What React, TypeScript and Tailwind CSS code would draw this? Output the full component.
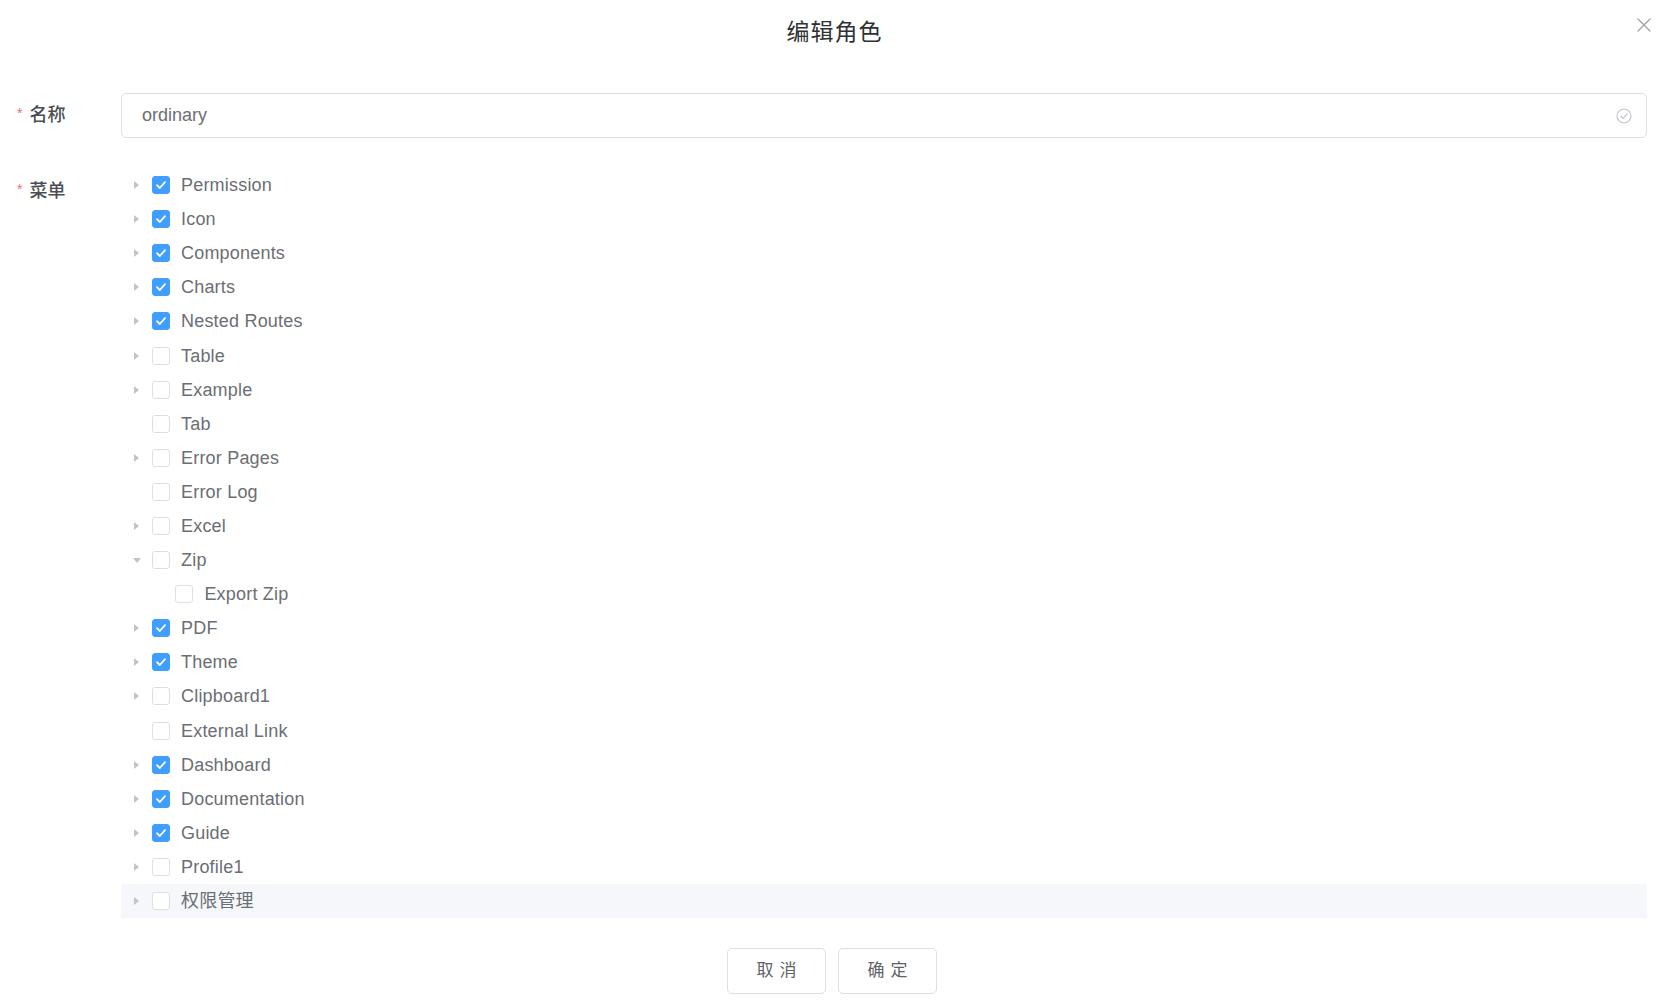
import React from "react";

interface Node {
  label: string;
  checked?: boolean;
  leaf?: boolean;
  open?: boolean;
  depth?: number;
}

const nodes: Node[] = [
  { label: "Permission", checked: true },
  { label: "Icon", checked: true },
  { label: "Components", checked: true },
  { label: "Charts", checked: true },
  { label: "Nested Routes", checked: true },
  { label: "Table" },
  { label: "Example" },
  { label: "Tab", leaf: true },
  { label: "Error Pages" },
  { label: "Error Log", leaf: true },
  { label: "Excel" },
  { label: "Zip", open: true },
  { label: "Export Zip", leaf: true, depth: 1 },
  { label: "PDF", checked: true },
  { label: "Theme", checked: true },
  { label: "Clipboard1" },
  { label: "External Link", leaf: true },
  { label: "Dashboard", checked: true },
  { label: "Documentation", checked: true },
  { label: "Guide", checked: true },
  { label: "Profile1" },
  { label: "权限管理" },
];

const Checkbox: React.FC<{ checked?: boolean }> = ({ checked }) =>
  checked ? (
    <span className="w-[18px] h-[18px] rounded-[3px] bg-[#409eff] border border-[#409eff] flex items-center justify-center shrink-0">
      <svg width="12" height="10" viewBox="0 0 12 10" fill="none">
        <path d="M2 5.2 L4.8 8 L10 2.2" stroke="white" strokeWidth="1.8" strokeLinecap="round" strokeLinejoin="round" />
      </svg>
    </span>
  ) : (
    <span className="w-[18px] h-[18px] rounded-[3px] bg-white border border-[#dcdfe6] shrink-0" />
  );

const Caret: React.FC<{ open?: boolean; hidden?: boolean }> = ({ open, hidden }) => (
  <span className="w-[31px] flex items-center justify-center shrink-0">
    {!hidden &&
      (open ? (
        <svg width="8" height="5" viewBox="0 0 8 5">
          <path d="M0 0 L8 0 L4 5 Z" fill="#c0c4cc" />
        </svg>
      ) : (
        <svg width="5" height="8" viewBox="0 0 5 8">
          <path d="M0 0 L5 4 L0 8 Z" fill="#c0c4cc" />
        </svg>
      ))}
  </span>
);

const App: React.FC = () => {
  return (
    <div className="w-[1668px] h-[1002px] bg-white relative text-[#606266] font-['Liberation_Sans','Noto_Sans_CJK_SC',sans-serif]">
      {/* header */}
      <div className="h-[64px] flex items-center justify-center">
        <span className="text-[23px] text-[#303133] tracking-[1px] pl-[1px]">编辑角色</span>
      </div>
      <button className="absolute top-[17px] right-[16px] w-[16px] h-[16px] flex items-center justify-center">
        <svg width="14" height="14" viewBox="0 0 14 14">
          <path d="M1 1 L13 13 M13 1 L1 13" stroke="#a0a3a9" strokeWidth="1.4" strokeLinecap="round" />
        </svg>
      </button>

      {/* form */}
      <div className="pl-[17px] pr-[21px] mt-[29px]">
        <div className="flex">
          <label className="w-[104px] shrink-0 h-[45px] leading-[45px] text-[18px] font-medium text-[#4b4d52]">
            <span className="text-[#f56c6c] text-[14px] mr-[7px] relative top-[-3px]">*</span>名称
          </label>
          <div className="flex-1 h-[45px] border border-[#dcdfe6] rounded-[5px] flex items-center pl-[20px] pr-[14px]">
            <span className="flex-1 text-[18px] text-[#6b6e73]">ordinary</span>
            <svg width="16" height="16" viewBox="0 0 16 16" fill="none">
              <circle cx="8" cy="8" r="7" stroke="#c0c4cc" strokeWidth="1.2" />
              <path d="M4.8 8.2 L7 10.3 L11.2 5.8" stroke="#c0c4cc" strokeWidth="1.2" strokeLinecap="round" strokeLinejoin="round" />
            </svg>
          </div>
        </div>

        <div className="flex mt-[29px]">
          <label className="w-[104px] shrink-0 h-[49px] leading-[49px] text-[18px] font-medium text-[#4b4d52]">
            <span className="text-[#f56c6c] text-[14px] mr-[7px] relative top-[-3px]">*</span>菜单
          </label>
          <div className="flex-1 flex flex-col pt-[1px]">
            {nodes.map((n, i) => (
              <div
                key={i}
                className={`h-[34.1px] flex items-center ${i === nodes.length - 1 ? "bg-[#f5f7fa]" : ""}`}
                style={{ paddingLeft: (n.depth ?? 0) * 23.4 }}
              >
                <Caret open={n.open} hidden={n.leaf} />
                <Checkbox checked={n.checked} />
                <span className="ml-[11px] text-[18px] tracking-[0.2px] leading-none text-[#6b6e73]">{n.label}</span>
              </div>
            ))}
          </div>
        </div>
      </div>

      {/* footer */}
      <div className="mt-[30px] flex justify-center gap-[12px] pr-[4px]">
        <button className="w-[99px] h-[46px] border border-[#dcdfe6] rounded-[5px] bg-white text-[17px] text-[#606266] tracking-[6px] pl-[6px]">
          取消
        </button>
        <button className="w-[99px] h-[46px] border border-[#dcdfe6] rounded-[5px] bg-white text-[17px] text-[#606266] tracking-[6px] pl-[6px]">
          确定
        </button>
      </div>
    </div>
  );
};

export default App;
